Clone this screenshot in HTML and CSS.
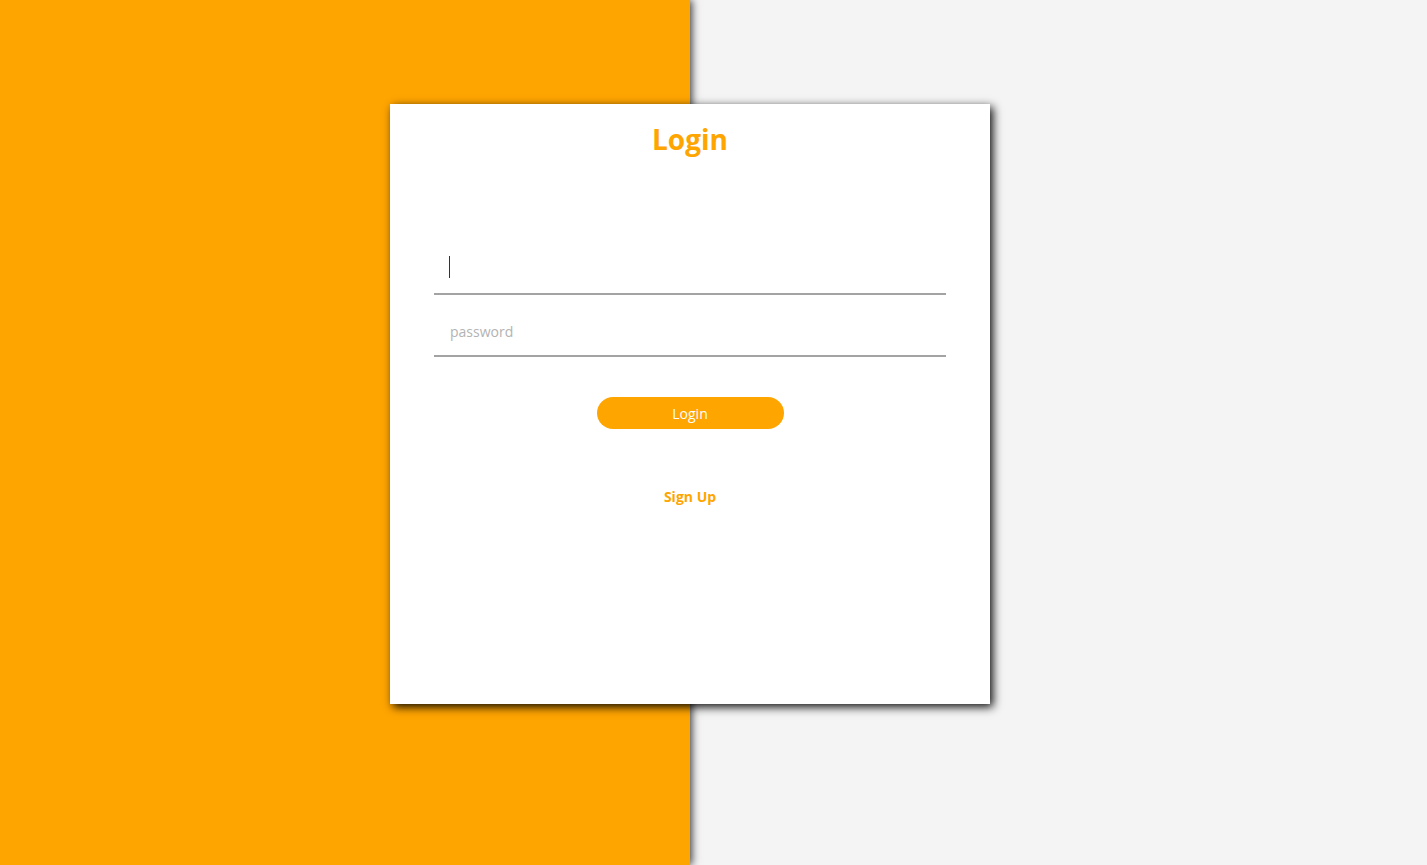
FILE: index.html
```html
<!DOCTYPE html>
<html lang="en">
<head>
<meta charset="utf-8">
<title>Login</title>
<link rel="stylesheet" href="styles.css">
</head>
<body>
<div class="page">
  <div class="side"></div>
  <div class="card">
    <h1 class="title">Login</h1>
    <form class="form">
      <div class="field-wrap">
        <input class="field" type="text" autofocus>
        <span class="caret"></span>
      </div>
      <div class="field-wrap">
        <input class="field" type="password" placeholder="password">
      </div>
      <button class="btn" type="button">Login</button>
      <a class="signup" href="#">Sign Up</a>
    </form>
  </div>
</div>
</body>
</html>
```

FILE: styles.css
```css
html, body {
  margin: 0;
  height: 100%;
}
body {
  background: #f4f4f4;
  font-family: "Open Sans", "Noto Sans", sans-serif;
  overflow: hidden;
}
.page {
  display: grid;
  grid-template-areas: "stack";
  height: 100vh;
}
.side {
  grid-area: stack;
  width: 690px;
  height: 100%;
  background: #ffa500;
  box-shadow: 2px 0 8px rgba(0, 0, 0, 0.75);
}
.card {
  grid-area: stack;
  align-self: start;
  justify-self: start;
  margin: 104px 0 0 390px;
  width: 600px;
  height: 600px;
  background: #fff;
  box-shadow: 3px 3px 9px rgba(0, 0, 0, 0.95);
  box-sizing: border-box;
  padding: 0 44px;
  display: flex;
  flex-direction: column;
}
.title {
  margin: 15px 0 0;
  text-align: center;
  color: #ffa500;
  font-size: 28px;
  line-height: 40px;
  font-weight: 700;
}
.form {
  display: flex;
  flex-direction: column;
  align-items: center;
  margin-top: 86px;
}
.field-wrap {
  position: relative;
  width: 100%;
  margin-bottom: 12px;
}
.field {
  display: block;
  width: 100%;
  box-sizing: border-box;
  height: 50px;
  border: none;
  border-bottom: 2px solid #a3a3a3;
  outline: none;
  padding: 0 16px;
  font-family: inherit;
  font-size: 14px;
  color: #333;
  background: transparent;
  caret-color: transparent;
}
.field::placeholder {
  color: #b3b3b3;
}
.caret {
  position: absolute;
  left: 15px;
  top: 11px;
  width: 1px;
  height: 22px;
  background: #333;
}
.btn {
  margin-top: 28px;
  width: 187px;
  height: 32px;
  border: none;
  border-radius: 16px;
  background: #ffa500;
  color: #fff;
  font-family: inherit;
  font-size: 14px;
  font-weight: 400;
  cursor: pointer;
}
.signup {
  margin-top: 58px;
  color: #ffa500;
  font-size: 14px;
  font-weight: 700;
  text-decoration: none;
  line-height: 20px;
}
```
